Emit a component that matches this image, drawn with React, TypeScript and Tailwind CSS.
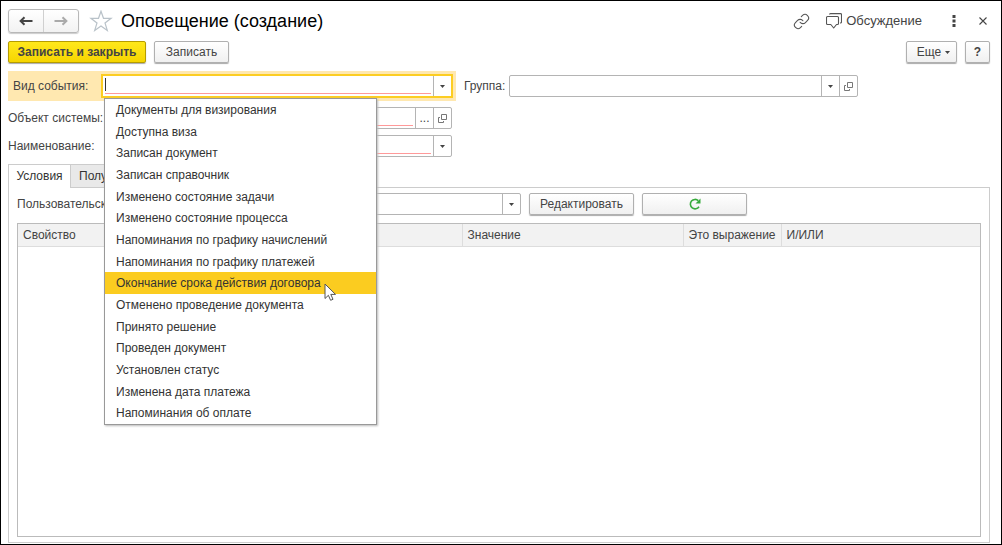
import { useState } from 'react';
import type { ReactNode } from 'react';
import clsx from 'clsx';
import { Link } from 'lucide-react';

const eventTypes = [
  'Документы для визирования',
  'Доступна виза',
  'Записан документ',
  'Записан справочник',
  'Изменено состояние задачи',
  'Изменено состояние процесса',
  'Напоминания по графику начислений',
  'Напоминания по графику платежей',
  'Окончание срока действия договора',
  'Отменено проведение документа',
  'Принято решение',
  'Проведен документ',
  'Установлен статус',
  'Изменена дата платежа',
  'Напоминания об оплате',
];

function CaretIcon() {
  return (
    <svg width="5" height="3" viewBox="0 0 5 3" aria-hidden="true">
      <path d="M0 0h5L2.5 3z" fill="#444" />
    </svg>
  );
}

function OpenIcon() {
  return (
    <svg width="9" height="9" viewBox="0 0 9 9" fill="none" stroke="#777" aria-hidden="true">
      <path d="M3.5.5h5v5h-5z" />
      <path d="M2 3.5H.5v5h5V7" />
    </svg>
  );
}

function ArrowIcon({ color, right }: { color: string; right?: boolean }) {
  return (
    <svg width="14" height="10" viewBox="0 0 14 10" className={clsx(right && 'rotate-180')} fill="none" stroke={color} strokeWidth="2" aria-hidden="true">
      <path d="M13.5 5H2M5.5 1.2 1.6 5l3.9 3.8" />
    </svg>
  );
}

function StarIcon() {
  return (
    <svg width="24" height="22" viewBox="0 0 24 22" fill="none" stroke="#b9c2c9" strokeWidth="1.2" aria-hidden="true">
      <path d="M12 1.200l2.500 7.100h7.600l-6.100 4.700 2.300 7.400L12 16l-6.300 4.400L8 13 1.900 8.300h7.600z" />
    </svg>
  );
}

function ChatIcon() {
  return (
    <svg width="16" height="16" viewBox="0 0 16 16" fill="none" stroke="#555" strokeWidth="1.1" strokeLinejoin="round" aria-hidden="true">
      <path d="M1.500 3.500h10a1 1 0 0 1 1 1v6a1 1 0 0 1-1 1H10.500l-2.800 3.500-2.900-3.500H1.500a1 1 0 0 1-1-1v-6a1 1 0 0 1 1-1z" />
      <path d="M3.500 1.600a1 1 0 0 1 1-1h10a1 1 0 0 1 1 1V9a1 1 0 0 1-1 1h-.5" />
    </svg>
  );
}

function RefreshIcon() {
  return (
    <svg width="12" height="12" viewBox="0 0 12 12" fill="none" aria-hidden="true">
      <path d="M10 8.700A4.700 4.700 0 1 1 9.300 2.700" stroke="#37ab3c" strokeWidth="1.600" />
      <path d="M11.500.5v5h-5z" fill="#37ab3c" />
    </svg>
  );
}

interface ButtonProps {
  children: ReactNode;
  className?: string;
  primary?: boolean;
  label?: string;
}

function Button({ children, className, primary, label }: ButtonProps) {
  return (
    <button
      type="button"
      aria-label={label}
      className={clsx(
        'flex h-[22px] items-center justify-center rounded-[2px] border shadow-[0_1px_1px_#aaa]',
        primary
          ? 'border-[#b59c00] bg-linear-to-b from-[#ffe81a] to-[#f6d500] font-bold text-[#444]'
          : 'border-[#b0b0b0] bg-linear-to-b from-white to-[#f0f0f0]',
        className
      )}
    >
      {children}
    </button>
  );
}

interface FieldProps {
  id: string;
  required?: boolean;
  focused?: boolean;
  actions: ('list' | 'more' | 'open')[];
}

const actionNames = { list: 'Выбрать из списка', more: 'Выбрать', open: 'Открыть' };

function Field({ id, required, focused, actions }: FieldProps) {
  return (
    <div
      className={clsx(
        'flex h-[22px] min-w-0 flex-1 border bg-white',
        focused ? 'border-[#fccd22] outline-1 outline-[#fccd22]' : 'rounded-[2px] border-[#b4b4b4]'
      )}
    >
      <div className="min-w-0 flex-1 px-[2px]">
        <div className="flex h-[17px] items-center">
          {focused && <span className="h-[13px] w-px shrink-0 bg-[#333]" />}
          <input id={id} type="text" className="h-full w-full min-w-0 px-1 outline-none" />
        </div>
        {required && <div className="h-px bg-[#ff9a9a]" />}
      </div>
      {actions.map((action) => (
        <button
          key={action}
          type="button"
          aria-label={actionNames[action]}
          className="flex w-[18px] shrink-0 items-center justify-center border-l border-[#b4b4b4]"
        >
          {action === 'list' && <CaretIcon />}
          {action === 'more' && '...'}
          {action === 'open' && <OpenIcon />}
        </button>
      ))}
    </div>
  );
}

function Header() {
  return (
    <header className="flex h-[40px] items-center pr-[14px] pl-[7px]">
      <div className="flex h-[24px] w-[71px] rounded-[3px] border border-[#b8b8b8] bg-linear-to-b from-white to-[#f2f2f2] shadow-[0_1px_1px_#ccc]">
        <button type="button" aria-label="Назад" className="flex flex-1 items-center justify-center border-r border-[#d0d0d0]">
          <ArrowIcon color="#444" />
        </button>
        <button type="button" aria-label="Вперед" className="flex flex-1 items-center justify-center">
          <ArrowIcon color="#aaa" right />
        </button>
      </div>
      <button type="button" aria-label="В избранное" className="ml-[10px]">
        <StarIcon />
      </button>
      <h1 className="ml-2 flex-1 text-[18px] leading-6 text-black">Оповещение (создание)</h1>
      <button type="button" aria-label="Получить ссылку">
        <Link size={17} strokeWidth={1.5} color="#555" />
      </button>
      <button type="button" className="ml-4 flex items-center gap-1 text-[13px]">
        <ChatIcon />
        Обсуждение
      </button>
      <button type="button" aria-label="Дополнительно" className="ml-[30px]">
        <svg width="4" height="12" viewBox="0 0 4 12" fill="#444" aria-hidden="true">
          <path d="M.5 0h3v3h-3zM.5 4.500h3v3h-3zM.5 9h3v3h-3z" />
        </svg>
      </button>
      <button type="button" aria-label="Закрыть" className="ml-[23px]">
        <svg width="8" height="8" viewBox="0 0 8 8" stroke="#444" strokeWidth="1.100" aria-hidden="true">
          <path d="M.5.5l7 7M7.500.5l-7 7" />
        </svg>
      </button>
    </header>
  );
}

function EventList({ selected, onSelect }: { selected: number; onSelect: (index: number) => void }) {
  return (
    <ul
      role="listbox"
      aria-label="Вид события"
      className="absolute top-[27px] left-[96px] z-10 flex h-[327px] w-[273px] flex-col border border-[#999] bg-white text-[#333] shadow-[1px_1px_2px_#bbb]"
    >
      {eventTypes.map((name, i) => (
        <li
          key={name}
          role="option"
          aria-selected={i === selected}
          onMouseEnter={() => onSelect(i)}
          className={clsx('flex flex-1 items-center pl-[11px]', i === selected && 'bg-[#fbcc20]')}
        >
          {name}
        </li>
      ))}
      <svg className="pointer-events-none absolute top-[184px] left-[219px]" width="13" height="19" viewBox="0 0 13 19" aria-hidden="true">
        <path d="M1 1v14.500l3.400-3.200 2.200 5 2.400-1-2.200-4.900h4.700z" fill="#fff" stroke="#555" />
      </svg>
    </ul>
  );
}

export default function App() {
  const [selected, setSelected] = useState(8);

  return (
    <div className="flex min-h-screen flex-col border border-black bg-white font-['Liberation_Sans',Arial,sans-serif] text-[12px] leading-4 text-[#444]">
      <Header />

      <div className="flex gap-2 pr-[11px] pl-[7px]">
        <Button primary className="w-[138px]">Записать и закрыть</Button>
        <Button className="w-[75px]">Записать</Button>
        <div className="flex-1" />
        <Button className="w-[51px] gap-1 pl-1">
          Еще
          <CaretIcon />
        </Button>
        <Button className="w-[25px] font-bold" label="Справка">?</Button>
      </div>

      <form className="mt-2 pl-[7px]">
        <div className="flex items-center gap-2">
          <div className="relative flex w-[448px] items-center bg-[#ffe8b0] py-1 pr-1">
            <label htmlFor="event" className="w-[94px] pl-[5px]">Вид события:</label>
            <Field id="event" required focused actions={['list']} />
            <EventList selected={selected} onSelect={setSelected} />
          </div>
          <label htmlFor="group" className="w-[37px] whitespace-nowrap">Группа:</label>
          <div className="flex max-w-[349px] flex-1">
            <Field id="group" actions={['list', 'open']} />
          </div>
        </div>
        <div className="mt-[6px] flex w-[444px] items-center">
          <label htmlFor="object" className="w-[97px] whitespace-nowrap">Объект системы:</label>
          <Field id="object" required actions={['more', 'open']} />
        </div>
        <div className="mt-[6px] flex w-[444px] items-center">
          <label htmlFor="name" className="w-[97px]">Наименование:</label>
          <Field id="name" required actions={['list']} />
        </div>
      </form>

      <div className="mt-[7px] flex flex-1 flex-col pr-[11px] pb-px pl-[7px]">
        <div role="tablist" className="z-1 flex h-[24px]">
          <button type="button" role="tab" aria-selected="true" className="w-[63px] border border-b-0 border-[#ccc] bg-white pb-[2px] text-[#333]">
            Условия
          </button>
          <button type="button" role="tab" aria-selected="false" className="border border-l-0 border-[#ccc] bg-[#e9e9e9] px-2 text-[#333]">
            Получатели
          </button>
        </div>
        <section className="-mt-px flex flex-1 flex-col border border-[#ccc] px-2 pt-[5px] pb-[5px]">
          <div className="flex items-center gap-2">
            <div className="flex w-[504px] items-center gap-2">
              <label htmlFor="settings">Пользовательские настройки:</label>
              <Field id="settings" actions={['list']} />
            </div>
            <Button className="w-[105px]">Редактировать</Button>
            <Button className="w-[105px]" label="Обновить">
              <RefreshIcon />
            </Button>
          </div>
          <div className="mt-2 flex-1 border border-[#bbb]">
            <table className="w-full table-fixed border-collapse text-left">
              <thead>
                <tr className="h-[22px] border-b border-[#ddd] bg-[#f2f2f2]">
                  <th className="w-[444px] border-r border-[#ddd] pl-[5px] font-normal">Свойство</th>
                  <th className="w-[221px] border-r border-[#ddd] pl-[5px] font-normal">Значение</th>
                  <th className="w-[98px] border-r border-[#ddd] pl-[5px] font-normal whitespace-nowrap">Это выражение</th>
                  <th className="pl-[5px] font-normal">И/ИЛИ</th>
                </tr>
              </thead>
              <tbody />
            </table>
          </div>
        </section>
      </div>
    </div>
  );
}
